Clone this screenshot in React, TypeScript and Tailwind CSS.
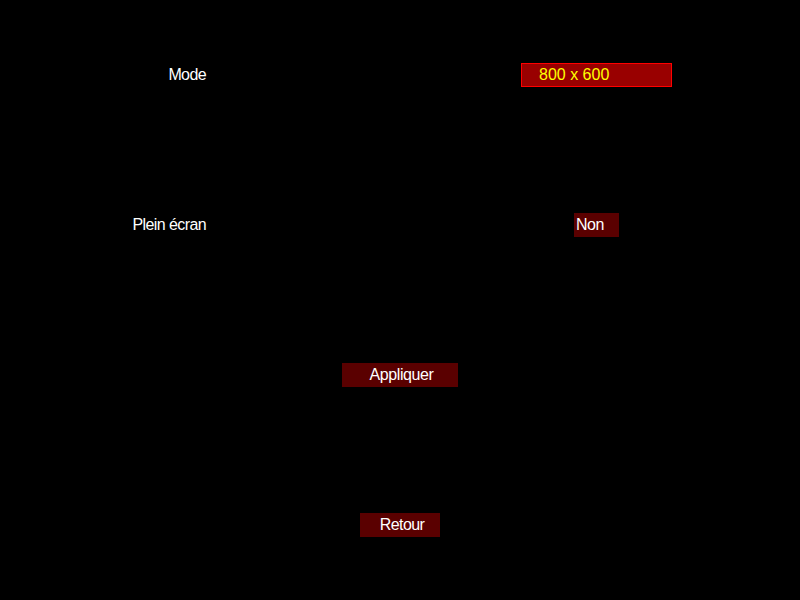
export default function App() {
  return (
    <div
      className="w-[800px] h-[600px] bg-black text-white text-[16px] grid grid-rows-4"
      style={{ fontFamily: '"Liberation Sans", Arial, sans-serif' }}
    >
      {/* Mode */}
      <div className="grid grid-cols-[206px_1fr] items-center">
        <div className="text-right tracking-[-0.6px]">Mode</div>
        <div className="pl-[187px] flex justify-center">
          <div className="w-[151px] h-[24px] leading-[22px] border border-[#ff0000] bg-[#990000] text-[#ffff00] pl-[17px]">
            800 x 600
          </div>
        </div>
      </div>

      {/* Plein écran */}
      <div className="grid grid-cols-[206px_1fr] items-center">
        <div className="text-right tracking-[-0.6px]">Plein écran</div>
        <div className="pl-[187px] flex justify-center">
          <div className="w-[45px] h-[24px] leading-[24px] bg-[#5a0000] pl-[2px] tracking-[-0.5px]">Non</div>
        </div>
      </div>

      {/* Appliquer */}
      <div className="flex items-center justify-center">
        <div className="w-[116px] h-[24px] leading-[24px] bg-[#5a0000] text-center pl-[3px] tracking-[-0.4px]">
          Appliquer
        </div>
      </div>

      {/* Retour */}
      <div className="flex items-center justify-center">
        <div className="w-[80px] h-[24px] leading-[24px] bg-[#5a0000] text-center pl-[4px] tracking-[-0.6px]">
          Retour
        </div>
      </div>
    </div>
  );
}
